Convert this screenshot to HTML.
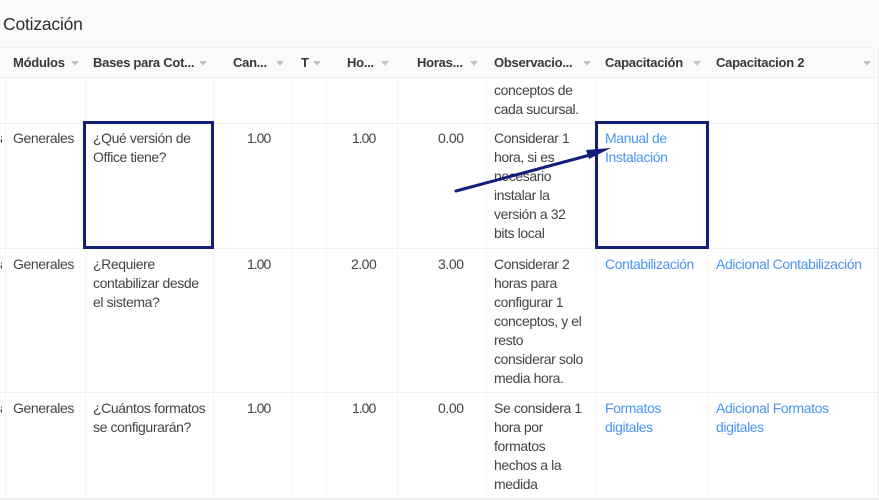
<!DOCTYPE html>
<html lang="es"><head><meta charset="utf-8"><title>Cotización</title>
<style>
html,body{margin:0;padding:0}
body{width:879px;height:500px;overflow:hidden;background:#fff;position:relative;font-family:"Liberation Sans",sans-serif;color:#444}
#p{position:absolute;inset:0;filter:blur(.3px)}
.a{position:absolute}
.t{position:absolute;font-size:14px;line-height:19px;height:19px;white-space:nowrap;letter-spacing:-.4px}
.n{letter-spacing:-1px}
.z{letter-spacing:-.5px}
.h{position:absolute;top:54px;font-size:13px;font-weight:bold;line-height:18px;white-space:nowrap;color:#383838;letter-spacing:-.25px}
.l{color:#4a94f2}
.v{position:absolute;top:78px;width:1px;height:422px;background:#f6f6f6}
.o{position:absolute;left:0;width:879px;height:1px;background:#efefef}
.c{position:absolute;top:61px;width:0;height:0;border-left:4.5px solid transparent;border-right:4.5px solid transparent;border-top:5px solid #c2c2c2}
</style></head><body><div id="p">
<div class="a" style="left:0;top:0;width:879px;height:47px;background:#fafafa"></div>
<div class="a" style="left:3px;top:13px;font-size:17.5px;line-height:22px;color:#2e2e2e;letter-spacing:-.2px">Cotización</div>
<div class="a" style="left:0;top:47px;width:875px;height:31px;background:#fafafa;border-top:1px solid #efefef;border-bottom:1px solid #ececec;box-sizing:border-box"></div>
<div class="a" style="left:877px;top:47px;width:1px;height:453px;background:#ececec"></div>
<div class="v" style="left:5px"></div><div class="v" style="left:85px"></div><div class="v" style="left:213px"></div><div class="v" style="left:292px"></div><div class="v" style="left:326px"></div><div class="v" style="left:397px"></div><div class="v" style="left:486px"></div><div class="v" style="left:596px"></div><div class="v" style="left:707px"></div>
<div class="o" style="top:123px"></div><div class="o" style="top:248px"></div><div class="o" style="top:392px"></div><div class="o" style="top:498px;height:2px"></div>

<div class="h" style="left:13px">Módulos</div><div class="c" style="left:71px"></div>
<div class="h" style="left:93px">Bases para Cot...</div><div class="c" style="left:199px"></div>
<div class="h" style="left:233px">Can...</div><div class="c" style="left:276px"></div>
<div class="h" style="left:301px">T</div><div class="c" style="left:313px"></div>
<div class="h" style="left:347px">Ho...</div><div class="c" style="left:381px"></div>
<div class="h" style="left:417px">Horas...</div><div class="c" style="left:470px"></div>
<div class="h" style="left:494px">Observacio...</div><div class="c" style="left:583px"></div>
<div class="h" style="left:605px">Capacitación</div><div class="c" style="left:693px"></div>
<div class="h" style="left:716px">Capacitacion 2</div><div class="c" style="left:863px"></div>

<div class="t" style="left:494px;top:81px">conceptos de</div>
<div class="t" style="left:494px;top:100px">cada sucursal.</div>

<div class="a" style="left:0;top:129px;font-size:14px;line-height:19px;width:2px;overflow:hidden">a</div>
<div class="t" style="left:13px;top:129px">Generales</div>
<div class="t" style="left:93px;top:129px">¿Qué versión de</div>
<div class="t" style="left:93px;top:148px">Office tiene?</div>
<div class="t n" style="left:247px;top:129px">1.00</div>
<div class="t n" style="left:352px;top:129px">1.00</div>
<div class="t" style="left:438px;top:129px">0.00</div>
<div class="t" style="left:494px;top:129px">Considerar 1</div>
<div class="t" style="left:494px;top:148px">hora, si es</div>
<div class="t" style="left:494px;top:167px">necesario</div>
<div class="t" style="left:494px;top:186px">instalar la</div>
<div class="t" style="left:494px;top:205px">versión a 32</div>
<div class="t" style="left:494px;top:224px">bits local</div>
<div class="t l" style="left:605px;top:129px">Manual de</div>
<div class="t l" style="left:605px;top:148px">Instalación</div>

<div class="a" style="left:0;top:255px;font-size:14px;line-height:19px;width:2px;overflow:hidden">a</div>
<div class="t" style="left:13px;top:255px">Generales</div>
<div class="t" style="left:93px;top:255px">¿Requiere</div>
<div class="t" style="left:93px;top:274px">contabilizar desde</div>
<div class="t" style="left:93px;top:293px">el sistema?</div>
<div class="t n" style="left:247px;top:255px">1.00</div>
<div class="t z" style="left:351px;top:255px">2.00</div>
<div class="t" style="left:438px;top:255px">3.00</div>
<div class="t" style="left:494px;top:255px">Considerar 2</div>
<div class="t" style="left:494px;top:274px">horas para</div>
<div class="t" style="left:494px;top:293px">configurar 1</div>
<div class="t" style="left:494px;top:312px">conceptos, y el</div>
<div class="t" style="left:494px;top:331px">resto</div>
<div class="t" style="left:494px;top:350px">considerar solo</div>
<div class="t" style="left:494px;top:369px">media hora.</div>
<div class="t l" style="left:605px;top:255px">Contabilización</div>
<div class="t l" style="left:716px;top:255px">Adicional Contabilización</div>

<div class="a" style="left:0;top:399px;font-size:14px;line-height:19px;width:2px;overflow:hidden">a</div>
<div class="t" style="left:13px;top:399px">Generales</div>
<div class="t" style="left:93px;top:399px">¿Cuántos formatos</div>
<div class="t" style="left:93px;top:418px">se configurarán?</div>
<div class="t n" style="left:247px;top:399px">1.00</div>
<div class="t n" style="left:352px;top:399px">1.00</div>
<div class="t" style="left:438px;top:399px">0.00</div>
<div class="t" style="left:494px;top:399px">Se considera 1</div>
<div class="t" style="left:494px;top:418px">hora por</div>
<div class="t" style="left:494px;top:437px">formatos</div>
<div class="t" style="left:494px;top:456px">hechos a la</div>
<div class="t" style="left:494px;top:475px">medida</div>
<div class="t l" style="left:605px;top:399px">Formatos</div>
<div class="t l" style="left:605px;top:418px">digitales</div>
<div class="t l" style="left:716px;top:399px">Adicional Formatos</div>
<div class="t l" style="left:716px;top:418px">digitales</div>

<div class="a" style="left:83px;top:121px;width:131px;height:128px;box-sizing:border-box;border:3px solid #111f78"></div>
<div class="a" style="left:595px;top:121px;width:114px;height:128px;box-sizing:border-box;border:3px solid #111f78"></div>
<svg class="a" style="left:0;top:0" width="879" height="500" viewBox="0 0 879 500">
<path d="M456 191 L590 155" stroke="#111f78" stroke-width="3" stroke-linecap="round" fill="none"/>
<path d="M611 148 L586 150 L589 159 Z" fill="#111f78"/>
</svg>
</div></body></html>
